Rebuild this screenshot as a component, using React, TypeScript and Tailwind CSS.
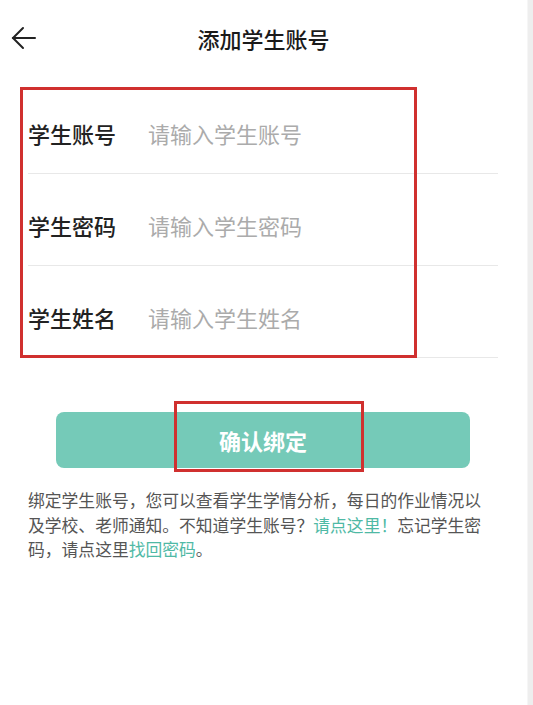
export default function App() {
  const rows = [
    { label: "学生账号", placeholder: "请输入学生账号" },
    { label: "学生密码", placeholder: "请输入学生密码" },
    { label: "学生姓名", placeholder: "请输入学生姓名" },
  ];

  return (
    <div className="relative flex h-[705px] w-full overflow-hidden bg-white font-['Noto_Sans_CJK_SC','Noto_Sans',sans-serif]">
      <div className="flex-1">
        {/* Header */}
        <div className="relative mt-[22px] flex h-[32px] items-center justify-center">
          <button className="absolute left-[11px] top-[4px]">
            <svg width="26" height="24" viewBox="0 0 26 24" fill="none" stroke="#222" strokeWidth="2" strokeLinecap="round">
              <path d="M24 12H2" />
              <path d="M12 2L2 12l10 10" />
            </svg>
          </button>
          <h1 className="text-[22px] font-medium text-[#1a1a1a]">添加学生账号</h1>
        </div>

        {/* Form */}
        <div className="ml-[28px] mr-[29px] mt-[28px]">
          {rows.map((r) => (
            <div key={r.label} className="flex h-[92px] items-center border-b border-[#e8e8e8] pt-[12px]">
              <span className="w-[120px] text-[22px] font-medium text-[#222]">{r.label}</span>
              <input
                className="flex-1 bg-transparent text-[22px] text-[#333] outline-none placeholder:text-[#ababab]"
                placeholder={r.placeholder}
              />
            </div>
          ))}
        </div>

        {/* Button */}
        <button className="ml-[56px] mt-[54px] flex h-[56px] w-[414px] items-center justify-center rounded-[8px] bg-[#75cab8] text-[22px] font-bold text-white">
          确认绑定
        </button>

        {/* Info */}
        <p className="ml-[28px] mt-[20px] w-[462px] text-[16.8px] leading-[24.5px] text-[#555]">
          绑定学生账号，您可以查看学生学情分析，每日的作业情况以及学校、老师通知。不知道学生账号？
          <span className="text-[#4fb9a5]">请点这里！</span>
          忘记学生密码，请点这里
          <span className="text-[#4fb9a5]">找回密码</span>。
        </p>
      </div>

      {/* Scroll strip */}
      <div className="w-[6px] border-l border-[#f6f6f6] bg-[#eeeeee]" />

      {/* Annotation boxes */}
      <div className="pointer-events-none absolute left-[20px] top-[87px] h-[271px] w-[397px] border-[3px] border-[#d0302f]" />
      <div className="pointer-events-none absolute left-[174px] top-[401px] h-[71px] w-[190px] border-[3px] border-[#d0302f]" />
    </div>
  );
}
